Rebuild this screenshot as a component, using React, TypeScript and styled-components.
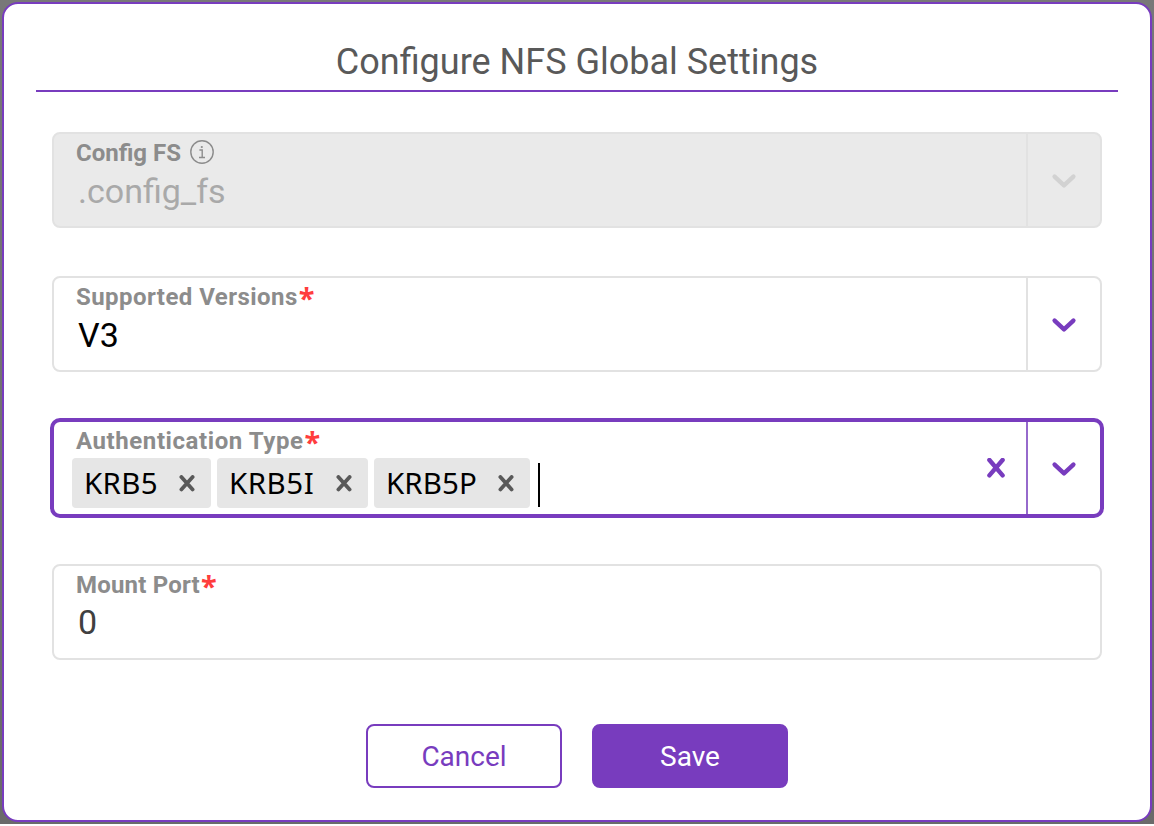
import React from 'react';
import styled, { createGlobalStyle } from 'styled-components';

const purple = '#783cbe';

const GlobalStyle = createGlobalStyle`
  * { box-sizing: border-box; }
  body { margin: 0; background: #fff; font-family: Roboto, "Open Sans", sans-serif; }
`;

const Backdrop = styled.div`
  width: 1154px;
  height: 824px;
  padding: 2px;
  background: linear-gradient(#787878, #6a6a6a);
`;

const Modal = styled.main`
  width: 1150px;
  height: 820px;
  padding: 30px 32px 0;
  border: 2px solid ${purple};
  border-radius: 16px;
  background: #fff;
`;

const Title = styled.h1`
  margin: 0;
  height: 58px;
  border-bottom: 2px solid ${purple};
  color: #595959;
  font-size: 36px;
  font-weight: 400;
  line-height: 56px;
  text-align: center;
`;

const Form = styled.div`
  display: flex;
  flex-direction: column;
  gap: 48px;
  padding: 40px 16px 0;
`;

const Field = styled.div<{ $disabled?: boolean; $focused?: boolean }>`
  display: flex;
  height: ${p => (p.$focused ? 100 : 96)}px;
  margin: ${p => (p.$focused ? '-2px' : '0')};
  border: ${p => (p.$focused ? `4px solid ${purple}` : '2px solid #e2e2e2')};
  border-radius: ${p => (p.$focused ? 10 : 8)}px;
  background: ${p => (p.$disabled ? '#eaeaea' : '#fff')};
`;

const Body = styled.div`
  flex: 1;
  padding: 5px 0 0 22px;
`;

const Label = styled.div<{ $spacing: number }>`
  display: flex;
  align-items: center;
  height: 28px;
  color: #8c8c8c;
  font-size: 24px;
  font-weight: 700;
  line-height: 28px;
  letter-spacing: ${p => p.$spacing}px;
  white-space: nowrap;
`;

const Required = styled.span`
  margin-left: 1px;
  color: #ff3d3d;
  font: 700 29px/36px "Noto Sans", sans-serif;
  letter-spacing: 0;
  padding-top: 1px;
`;

const InfoIcon = styled.svg`
  margin: 0 0 2px 9px;
`;

const Value = styled.div<{ $color: string; $height?: number }>`
  padding-left: 2px;
  height: 48px;
  color: ${p => p.$color};
  font-size: 34px;
  line-height: ${p => p.$height ?? 48}px;
`;

const Tags = styled.div`
  display: flex;
  align-items: center;
  gap: 6px;
  height: 50px;
  margin: 3px 0 0 -4px;
`;

const Tag = styled.div<{ $width: number }>`
  display: flex;
  align-items: center;
  justify-content: space-between;
  width: ${p => p.$width}px;
  height: 50px;
  padding: 0 16px 0 12px;
  border-radius: 4px;
  background: #e6e6e6;
  color: #000;
  font: 400 29.5px/50px "Noto Sans", sans-serif;
`;

const TagText = styled.span<{ $spacing: number }>`
  letter-spacing: ${p => p.$spacing}px;
`;

const Caret = styled.span`
  width: 2px;
  height: 44px;
  margin: 4px 0 0 2px;
  background: #000;
`;

const Clear = styled.div`
  display: flex;
  align-items: center;
  padding-right: 21px;
`;

const Toggle = styled.div<{ $line: string }>`
  display: flex;
  align-items: center;
  justify-content: center;
  width: 74px;
  padding: 2px 0 0;
  border-left: 2px solid ${p => p.$line};
`;

const Actions = styled.div`
  display: flex;
  justify-content: center;
  gap: 30px;
  padding-top: 64px;
`;

const Button = styled.button<{ $primary?: boolean }>`
  width: 196px;
  height: 64px;
  padding: 2px 0 0;
  border: 2px solid ${purple};
  border-radius: 8px;
  background: ${p => (p.$primary ? purple : '#fff')};
  color: ${p => (p.$primary ? '#fff' : purple)};
  font: 400 28px/58px Roboto, sans-serif;
`;

const Chevron = ({ color = purple }: { color?: string }) => (
  <svg width="26" height="18" viewBox="0 0 26 18" fill="none" stroke={color} strokeWidth="4.4" strokeLinecap="round" strokeLinejoin="round">
    <path d="M3.6 4.6 13 13.4 22.4 4.6" />
  </svg>
);

const Cross = ({ color, w, h, weight = 3.8 }: { color: string; w: number; h: number; weight?: number }) => (
  <svg width={w} height={h} viewBox={`0 0 ${w} ${h}`} fill="none" stroke={color} strokeWidth={weight} strokeLinecap="round">
    <path d={`M2.4 2 ${w - 2.4} ${h - 2.6}M${w - 2.4} 2 2.4 ${h - 2.6}`} />
  </svg>
);

const Info = () => (
  <InfoIcon width="24" height="24" viewBox="0 0 24 24" fill="none" stroke="#8c8c8c" strokeWidth="1.4">
    <circle cx="12" cy="12" r="11.2" />
    <path d="M9.4 10h2.8v7.5M9 17.5h6" />
    <circle cx="11.8" cy="7" r="1.1" fill="#8c8c8c" stroke="none" />
  </InfoIcon>
);

const tags = [
  { text: 'KRB5', width: 139, spacing: 0.3 },
  { text: 'KRB5I', width: 151, spacing: 0.5 },
  { text: 'KRB5P', width: 156, spacing: 0.1 },
];

export default function App() {
  return (
    <Backdrop>
      <GlobalStyle />
      <Modal>
        <Title>Configure NFS Global Settings</Title>
        <Form>
          <Field $disabled>
            <Body>
              <Label $spacing={0}>Config FS<Info /></Label>
              <Value $color="#a9a9a9">.config_fs</Value>
            </Body>
            <Toggle $line="#e2e2e2"><Chevron color="#d2d2d2" /></Toggle>
          </Field>
          <Field>
            <Body>
              <Label $spacing={0.45}>Supported Versions<Required>*</Required></Label>
              <Value $color="#000">V3</Value>
            </Body>
            <Toggle $line="#e2e2e2"><Chevron /></Toggle>
          </Field>
          <Field $focused>
            <Body>
              <Label $spacing={0.58}>Authentication Type<Required>*</Required></Label>
              <Tags>
                {tags.map(t => (
                  <Tag key={t.text} $width={t.width}>
                    <TagText $spacing={t.spacing}>{t.text}</TagText>
                    <Cross color="#595959" w={16} h={17} />
                  </Tag>
                ))}
                <Caret />
              </Tags>
            </Body>
            <Clear><Cross color={purple} w={18} h={20} weight={4.4} /></Clear>
            <Toggle $line="#966acc"><Chevron /></Toggle>
          </Field>
          <Field>
            <Body>
              <Label $spacing={0.2}>Mount Port<Required>*</Required></Label>
              <Value $color="#404040" $height={46}>0</Value>
            </Body>
          </Field>
        </Form>
        <Actions>
          <Button>Cancel</Button>
          <Button $primary>Save</Button>
        </Actions>
      </Modal>
    </Backdrop>
  );
}
